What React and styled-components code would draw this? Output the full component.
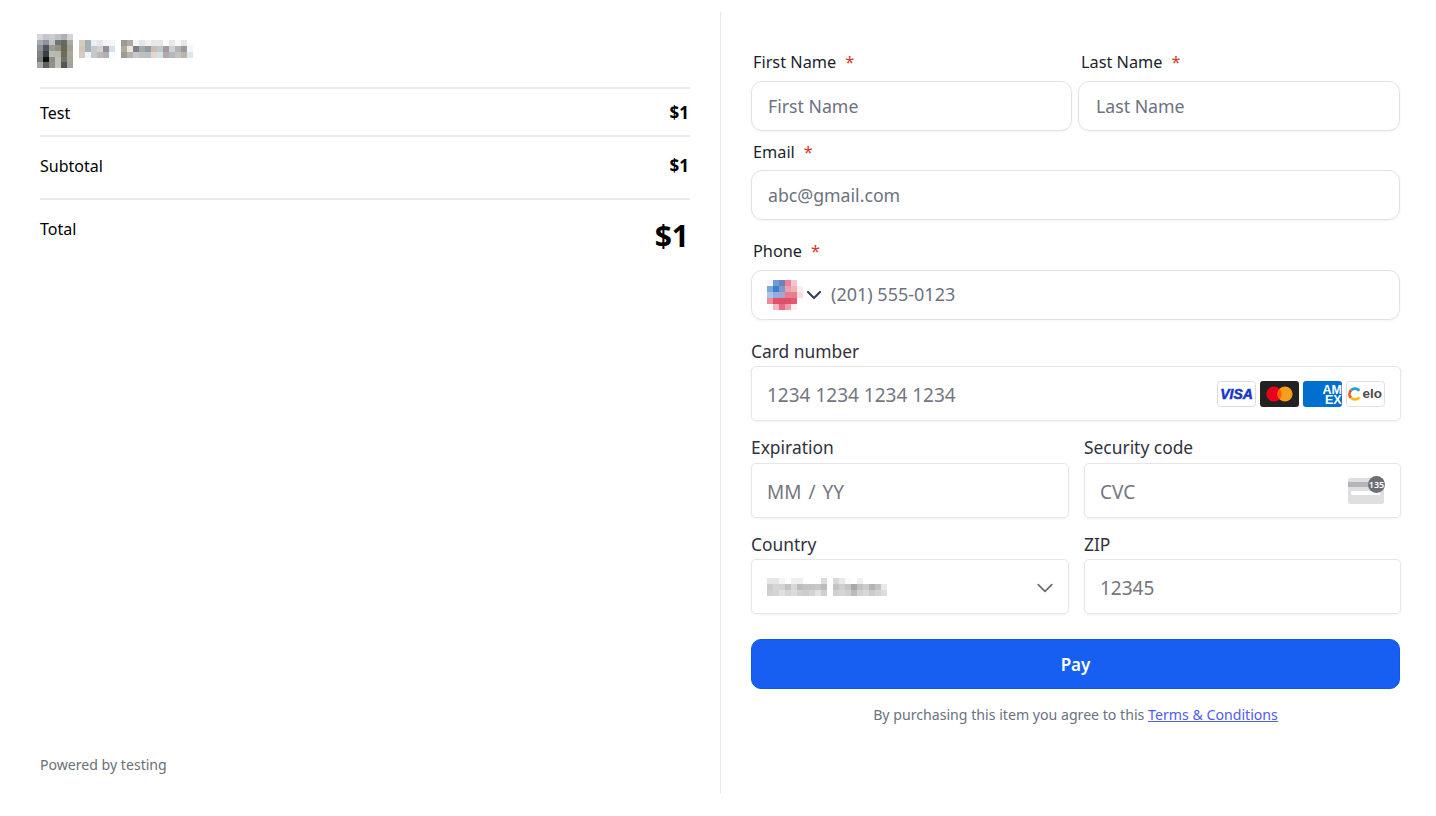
import React from "react";
import styled, { createGlobalStyle } from "styled-components";

const GlobalStyle = createGlobalStyle`
  html, body {
    margin: 0;
    padding: 0;
    background: #fff;
    font-family: "Noto Sans", "Open Sans", sans-serif;
  }
`;

const Page = styled.div`
  display: flex;
  width: 1436px;
  height: 816px;
  box-sizing: border-box;
  padding: 12px 0 22px;
`;

const Summary = styled.div`
  display: flex;
  flex-direction: column;
  width: 721px;
  box-sizing: border-box;
  padding: 22px 30px 19px 40px;
  border-right: 1px solid #e9e9ec;
`;

const Brand = styled.div`
  display: flex;
  align-items: flex-start;
  gap: 6px;
  height: 34px;
  margin: 0 0 19px -3px;
`;

const BrandName = styled.div`
  margin-top: 6px;
`;

const Row = styled.div`
  display: flex;
  justify-content: space-between;
  align-items: flex-start;
  height: ${(p) => p.$height}px;
  padding-top: ${(p) => p.$pad || 0}px;
  box-sizing: border-box;
  border-top: 2px solid #e9e9ee;
  font-size: 16px;
  color: #000;
`;

const Cell = styled.span`
  line-height: ${(p) => p.$line || 24}px;
  margin-top: ${(p) => p.$drop || 0}px;
`;

const Amount = styled.span`
  font-weight: 700;
  font-size: ${(p) => (p.$big ? "30px" : "17px")};
  line-height: ${(p) => p.$line || 24}px;
  margin-right: 1px;
`;

const Powered = styled.div`
  margin-top: auto;
  font-size: 14.1px;
  line-height: 20px;
  color: #6b6f76;
`;

const Form = styled.form`
  display: flex;
  flex-direction: column;
  width: 650px;
  margin-left: 30px;
  padding-top: 38px;
`;

const Pair = styled.div`
  display: grid;
  grid-template-columns: ${(p) => p.$cols};
  column-gap: ${(p) => p.$gap}px;
`;

const Label = styled.label`
  display: block;
  height: 24px;
  line-height: 25px;
  margin: ${(p) => p.$top || 0}px 0 ${(p) => p.$bottom ?? 7}px ${(p) => p.$inset ?? 2}px;
  font-size: 16.3px;
  color: #1a1f2e;
`;

const Star = styled.span`
  margin-left: 9px;
  color: #d9342b;
`;

const TextBox = styled.div`
  display: flex;
  align-items: center;
  height: 50px;
  width: ${(p) => p.$width || "649px"};
  box-sizing: border-box;
  padding-left: ${(p) => p.$inset ?? 16}px;
  border: 1px solid #e1e1e8;
  border-radius: 11px;
  box-shadow: 0 1px 3px rgba(0, 0, 0, 0.05);
  font-size: 17.7px;
  color: #6b7280;
`;

const ChevronSlot = styled.span`
  display: flex;
  margin: 0 9px 0 3px;
`;

const PhoneText = styled.span`
  font-size: 18px;
  margin-bottom: 2px;
`;

const CardLabel = styled.label`
  display: block;
  height: 22px;
  line-height: 23px;
  margin-top: ${(p) => p.$top || 0}px;
  margin-bottom: ${(p) => p.$bottom}px;
  font-size: 17.4px;
  color: #30313d;
`;

const CardBox = styled.div`
  display: flex;
  align-items: center;
  justify-content: space-between;
  height: 55px;
  box-sizing: border-box;
  padding: 0 15px;
  border: 1px solid #e6e6e6;
  border-radius: 5px;
  box-shadow: 0 1px 3px rgba(0, 0, 0, 0.05);
  font-size: 19px;
  color: #757680;
`;

const CardText = styled.span`
  padding-top: 2px;
  word-spacing: ${(p) => p.$spacing || 0}px;
`;

const SelectChevron = styled.span`
  display: flex;
  margin: 2px -1px 0 0;
`;

const Brands = styled.div`
  display: flex;
  gap: 4px;
`;

const PayButton = styled.button`
  display: block;
  width: 649px;
  height: 50px;
  margin-top: 25px;
  padding: 1px 0 0;
  border: 1px solid #0f57e6;
  border-radius: 10px;
  background: #175ff3;
  color: #fff;
  font-family: inherit;
  font-size: 17px;
  font-weight: 600;
`;

const Terms = styled.p`
  width: 649px;
  margin: 15px 0 0;
  text-align: center;
  font-size: 14.15px;
  line-height: 22px;
  color: #6b7280;

  a {
    color: #4f5bf0;
    text-decoration: underline;
  }
`;

const MosaicSvg = styled.svg`
  display: block;
  flex: none;
`;

// the screenshot has these areas pixelated, so they are drawn as colour cells
const Mosaic = ({ cells, size = 6, rowSize = size }) => (
  <MosaicSvg width={cells[0].length * size} height={cells.length * rowSize} shapeRendering="crispEdges">
    {cells.map((line, y) =>
      line.map((c, x) => (
        <rect key={`${x}-${y}`} x={x * size} y={y * rowSize} width={size} height={rowSize} fill={c} />
      ))
    )}
  </MosaicSvg>
);

const logoCells = [
  ["#d8d6dc", "#c5c4cd", "#cdccd3", "#c0c2c6", "#adb0b4", "#d3d5d5"],
  ["#a7a8b3", "#8f919f", "#c2c3c9", "#70757a", "#68695f", "#aaaaa4"],
  ["#8e9097", "#50555f", "#9a9b92", "#8f8f82", "#6c684f", "#a0a095"],
  ["#818485", "#39404a", "#b9bbb2", "#b6b8ae", "#6e6c58", "#a8a89c"],
  ["#7a7c7b", "#101212", "#8b8d84", "#bfc0b6", "#707265", "#a4a59a"],
  ["#a6a7a8", "#5e6060", "#8e908a", "#c1c2bb", "#54565a", "#a3a4a2"],
];

const nameCells = [
  ["#d6cbbd", "#a3b0b7", "#e9eff2", "#e6e7e9", "#f4f4f5", "#f5f5f5", "#fff", "#9c9a92", "#adaba8", "#f5f7f7", "#e3e6e6", "#f1f1f1", "#e8e8e8", "#e8e6e6", "#fdfdfd", "#e7e7e7", "#f8f8f8", "#e7e6e6", "#fff"],
  ["#d2c6b6", "#a5b0b7", "#c3cacd", "#d8d2cc", "#8f8f9e", "#d5dfe6", "#fff", "#adaca2", "#f0e6d6", "#7c7f8c", "#a5a9ac", "#8e9aa4", "#c9bdb4", "#bcc9cd", "#a29a9c", "#c8d2d8", "#b0b3b5", "#9a9a9c", "#f4f7f9"],
  ["#d4ccbf", "#eef6fb", "#c4c8c8", "#bcb8b6", "#b5adb9", "#f9fcfe", "#fff", "#9c9a92", "#b6b4b0", "#c8c8c8", "#bfc1c1", "#bcc0c0", "#e6d6d0", "#d3e0e4", "#b5a8a8", "#b4b8bb", "#c2c2c0", "#b8b4aa", "#dfe6ec"],
];

const flagCells = [
  ["#f2f4f8", "#719ad6", "#6e83bd", "#ea8195", "#f7c5d0", "#fff"],
  ["#7ea7dd", "#3d7fcb", "#7f97cd", "#e9a0b0", "#f0b2bd", "#fbeef0"],
  ["#a9c4e8", "#8fb0dc", "#a9a4c9", "#e57c8e", "#e87e8f", "#f8dde1"],
  ["#ef8a9c", "#e5516b", "#e24f69", "#e24f69", "#e45a72", "#fff"],
  ["#fff", "#f3b6c2", "#e76c83", "#f09cab", "#fbf0f1", "#fff"],
];

const countryCells = [
  ["#e6e6e6", "#e6e6e6", "#f4f4f4", "#fff", "#f0f0f0", "#efefef", "#fff", "#fff", "#fff", "#dcdcdc", "#fff", "#d8d8d8", "#e8e8e8", "#fafafa", "#fff", "#f0f0f0", "#fff", "#fff", "#fff", "#fff"],
  ["#cccccc", "#d5d5d5", "#d3d3d3", "#c3c3c3", "#d7d7d7", "#bdbdbd", "#c3c3c3", "#c3c3c3", "#c7c7c7", "#bdbdbd", "#fff", "#c4c4c4", "#cfcfcf", "#c4c4c4", "#a8a8a8", "#c2c2c2", "#cbcbcb", "#b3b3b3", "#c3c3c3", "#e8e8e8"],
  ["#d0d0d0", "#d4d4d4", "#e0e0e0", "#d5d5d5", "#dcdcdc", "#d0d0d0", "#cccccc", "#d4d4d4", "#e2e2e2", "#cfcfcf", "#fff", "#d0d0d0", "#d6d6d6", "#d0d0d0", "#bcbcbc", "#d2d2d2", "#d8d8d8", "#cccccc", "#d4d4d4", "#dcdcdc"],
];

const Chevron = ({ size, color, width }) => (
  <svg width={size} height={size} viewBox="0 0 16 16" fill="none">
    <path d="M2 5l6 6 6-6" stroke={color} strokeWidth={width} strokeLinecap="round" strokeLinejoin="round" />
  </svg>
);

const Visa = () => (
  <svg width="39" height="26" viewBox="0 0 39 26">
    <rect x="0.5" y="0.5" width="38" height="25" rx="3" fill="#fff" stroke="#dcdde0" />
    <text x="19.5" y="18" textAnchor="middle" fontFamily="Liberation Sans, sans-serif" fontSize="14" fontWeight="700" fontStyle="italic" fill="#1434cb" stroke="#1434cb" strokeWidth="0.5">
      VISA
    </text>
  </svg>
);

const Mastercard = () => (
  <svg width="39" height="26" viewBox="0 0 39 26">
    <rect width="39" height="26" rx="3" fill="#222222" />
    <circle cx="14" cy="13" r="7.6" fill="#eb001b" />
    <circle cx="25" cy="13" r="7.6" fill="#f79e1b" />
    <path d="M19.5 7.7a7.6 7.6 0 0 1 0 10.6a7.6 7.6 0 0 1 0-10.6z" fill="#ff5f00" />
  </svg>
);

const Amex = () => (
  <svg width="39" height="26" viewBox="0 0 39 26">
    <rect width="39" height="26" rx="3" fill="#006fcf" />
    <text fontFamily="Liberation Sans, sans-serif" fontSize="12.5" fontWeight="700" fill="#fff">
      <tspan x="19.5" y="12.5">
        AM
      </tspan>
      <tspan x="22" y="23">
        EX
      </tspan>
    </text>
  </svg>
);

const Elo = () => (
  <svg width="39" height="26" viewBox="0 0 39 26">
    <rect x="0.5" y="0.5" width="38" height="25" rx="3" fill="#fff" stroke="#e0e0e2" />
    <g fill="none" strokeWidth="2.8">
      <path d="M5 9.2a5.5 5.5 0 0 1 8.4 0.6" stroke="#1ba0dc" />
      <path d="M5 16.8a5.5 5.5 0 0 1 0-7.6" stroke="#ef5a24" />
      <path d="M13.4 16.2a5.5 5.5 0 0 1-8.4 0.6" stroke="#fdb913" />
    </g>
    <text x="16.5" y="17.3" fontFamily="Liberation Sans, sans-serif" fontSize="13.5" fontWeight="700" fill="#4a4a4a">
      elo
    </text>
  </svg>
);

const CvcIcon = () => (
  <svg width="37" height="30" viewBox="0 0 37 30">
    <rect x="0" y="2" width="36" height="26" rx="2.5" fill="#dfdfe1" />
    <rect x="0" y="6" width="36" height="5" fill="#b5b5b8" />
    <rect x="3" y="15" width="29" height="4" rx="1" fill="#fff" />
    <circle cx="28.5" cy="8.5" r="8.5" fill="#6d6e78" />
    <text x="28.5" y="11.7" textAnchor="middle" fontFamily="Noto Sans, sans-serif" fontSize="9" fontWeight="600" fill="#fff">
      135
    </text>
  </svg>
);

export default function App() {
  return (
    <Page>
      <GlobalStyle />
      <Summary>
        <Brand>
          <Mosaic cells={logoCells} rowSize={34 / 6} />
          <BrandName>
            <Mosaic cells={nameCells} />
          </BrandName>
        </Brand>
        <Row $height={48} $pad={12}>
          <Cell>Test</Cell>
          <Amount>$1</Amount>
        </Row>
        <Row $height={63} $pad={6}>
          <Cell $line={46}>Subtotal</Cell>
          <Amount $line={46}>$1</Amount>
        </Row>
        <Row $height={70} $pad={14}>
          <Cell $drop={3}>Total</Cell>
          <Amount $big $line={44}>
            $1
          </Amount>
        </Row>
        <Powered>Powered by testing</Powered>
      </Summary>

      <Form>
        <Pair $cols="321px 322px" $gap={6}>
          <div>
            <Label>
              First Name<Star>*</Star>
            </Label>
            <TextBox $width="321px">First Name</TextBox>
          </div>
          <div>
            <Label $inset={3}>
              Last Name<Star>*</Star>
            </Label>
            <TextBox $width="322px" $inset={17}>
              Last Name
            </TextBox>
          </div>
        </Pair>

        <Label $top={9} $bottom={6}>
          Email<Star>*</Star>
        </Label>
        <TextBox>abc@gmail.com</TextBox>

        <Label $top={19}>
          Phone<Star>*</Star>
        </Label>
        <TextBox $inset={15}>
          <Mosaic cells={flagCells} />
          <ChevronSlot>
            <Chevron size={16} color="#39415a" width={2.2} />
          </ChevronSlot>
          <PhoneText>(201) 555-0123</PhoneText>
        </TextBox>

        <CardLabel $top={20} $bottom={4}>
          Card number
        </CardLabel>
        <CardBox>
          <CardText>1234 1234 1234 1234</CardText>
          <Brands>
            <Visa />
            <Mastercard />
            <Amex />
            <Elo />
          </Brands>
        </CardBox>

        <Pair $cols="318px 317px" $gap={15}>
          <div>
            <CardLabel $top={15} $bottom={5}>
              Expiration
            </CardLabel>
            <CardBox>
              <CardText $spacing={2}>MM / YY</CardText>
            </CardBox>
          </div>
          <div>
            <CardLabel $top={15} $bottom={5}>
              Security code
            </CardLabel>
            <CardBox>
              <CardText>CVC</CardText>
              <CvcIcon />
            </CardBox>
          </div>
        </Pair>

        <Pair $cols="318px 317px" $gap={15}>
          <div>
            <CardLabel $top={15} $bottom={4}>
              Country
            </CardLabel>
            <CardBox>
              <Mosaic cells={countryCells} />
              <SelectChevron>
                <Chevron size={18} color="#6d6e78" width={1.6} />
              </SelectChevron>
            </CardBox>
          </div>
          <div>
            <CardLabel $top={15} $bottom={4}>
              ZIP
            </CardLabel>
            <CardBox>
              <CardText>12345</CardText>
            </CardBox>
          </div>
        </Pair>

        <PayButton type="button">Pay</PayButton>
        <Terms>
          By purchasing this item you agree to this <a href="#terms">Terms &amp; Conditions</a>
        </Terms>
      </Form>
    </Page>
  );
}
